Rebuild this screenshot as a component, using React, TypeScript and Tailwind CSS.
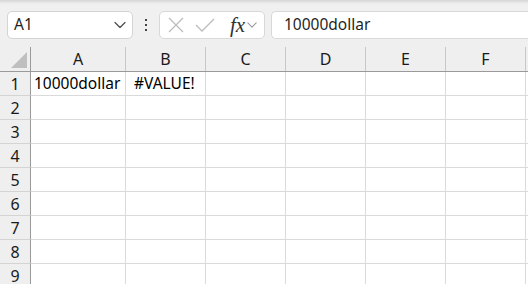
import React from "react";

const font = { fontFamily: '"Noto Sans", "Open Sans", Arial, sans-serif' };

function Chevron({ className }: { className?: string }) {
  return (
    <svg width="12" height="8" viewBox="0 0 12 8" className={className} fill="none">
      <path d="M1 1.5 L6 6.5 L11 1.5" stroke="currentColor" strokeWidth="1.3" strokeLinecap="round" strokeLinejoin="round" />
    </svg>
  );
}

const cols = [
  { name: "A", w: "w-[95px]" },
  { name: "B", w: "w-[80px]" },
  { name: "C", w: "w-[80px]" },
  { name: "D", w: "w-[80px]" },
  { name: "E", w: "w-[80px]" },
  { name: "F", w: "w-[80px]" },
];

const rows = [1, 2, 3, 4, 5, 6, 7, 8, 9];

export default function App() {
  return (
    <div className="w-[528px] h-[284px] overflow-hidden bg-[#f0f0f0] text-[#1f1f1f]" style={font}>
      {/* toolbar */}
      <div className="h-[40px] flex flex-col">
        <div className="h-[4px] bg-gradient-to-b from-[#d6d6d6] to-[#f0f0f0]" />
        <div className="flex items-start pt-[7px] pl-[7px]">
          <div className="w-[126px] h-[28px] bg-white border border-[#d4d4d4] rounded-[5px] flex items-center justify-between pl-[6px] pr-[6px]">
            <span className="text-[15.5px] leading-none">A1</span>
            <Chevron className="text-[#505050]" />
          </div>
          <div className="w-[26px] h-[28px] flex flex-col items-center justify-center gap-[3px]">
            <div className="w-[2px] h-[2px] bg-[#444]" />
            <div className="w-[2px] h-[2px] bg-[#444]" />
            <div className="w-[2px] h-[2px] bg-[#444]" />
          </div>
          <div className="w-[106px] h-[28px] bg-white border border-[#d8d8d8] rounded-[5px] flex items-center pl-[7px]">
            <svg width="18" height="18" viewBox="0 0 18 18" fill="none">
              <path d="M2 2 L16 16 M16 2 L2 16" stroke="#bcbcbc" strokeWidth="1.3" />
            </svg>
            <svg width="20" height="16" viewBox="0 0 20 16" fill="none" className="ml-[10px]">
              <path d="M1 8 L7 14 L19 2" stroke="#bcbcbc" strokeWidth="1.3" />
            </svg>
            <span
              className="ml-[15px] text-[21px] italic leading-none text-[#303030]"
              style={{ fontFamily: '"Liberation Serif", "DejaVu Serif", serif' }}
            >
              fx
            </span>
            <Chevron className="ml-[2px] text-[#9a9a9a] w-[10px]" />
          </div>
          <div className="ml-[6px] flex-1 h-[28px] bg-white border border-[#d8d8d8] rounded-l-[5px] border-r-0 flex items-center pl-[12px]">
            <span className="text-[15.5px] leading-none">10000dollar</span>
          </div>
        </div>
      </div>

      {/* column header */}
      <div className="h-[32px] flex border-b border-[#9a9a9a] bg-[#efefef]">
        <div className="w-[31px] pt-[7px] flex flex-col">
          <div className="flex-1 border-r border-[#9a9a9a] relative">
            <svg width="16" height="16" viewBox="0 0 16 16" className="absolute left-[11px] top-[5px]">
              <path d="M16 0 L16 16 L0 16 Z" fill="#bfbfbf" />
            </svg>
          </div>
        </div>
        {cols.map((c) => (
          <div key={c.name} className={`${c.w} pt-[7px] flex flex-col`}>
            <div className="flex-1 border-r border-[#c8c8c8] flex items-center justify-center text-[16px] text-[#1a1a1a]">
              {c.name}
            </div>
          </div>
        ))}
        <div className="flex-1" />
      </div>

      {/* rows */}
      {rows.map((r) => (
        <div key={r} className="h-[24px] flex">
          <div className="w-[31px] bg-[#efefef] border-r border-[#9a9a9a] border-b border-b-[#d4d4d4] flex items-center justify-center text-[16px] text-[#1a1a1a]">
            {r}
          </div>
          {cols.map((c, i) => (
            <div
              key={c.name}
              className={`${c.w} bg-white border-r border-b border-[#dadada] flex items-center pl-[3px] text-[15.5px] text-black whitespace-nowrap overflow-hidden`}
            >
              {r === 1 && i === 0 ? "10000dollar" : r === 1 && i === 1 ? <span className="pl-[5px]">#VALUE!</span> : ""}
            </div>
          ))}
          <div className="flex-1 bg-white border-b border-[#dadada]" />
        </div>
      ))}
    </div>
  );
}
